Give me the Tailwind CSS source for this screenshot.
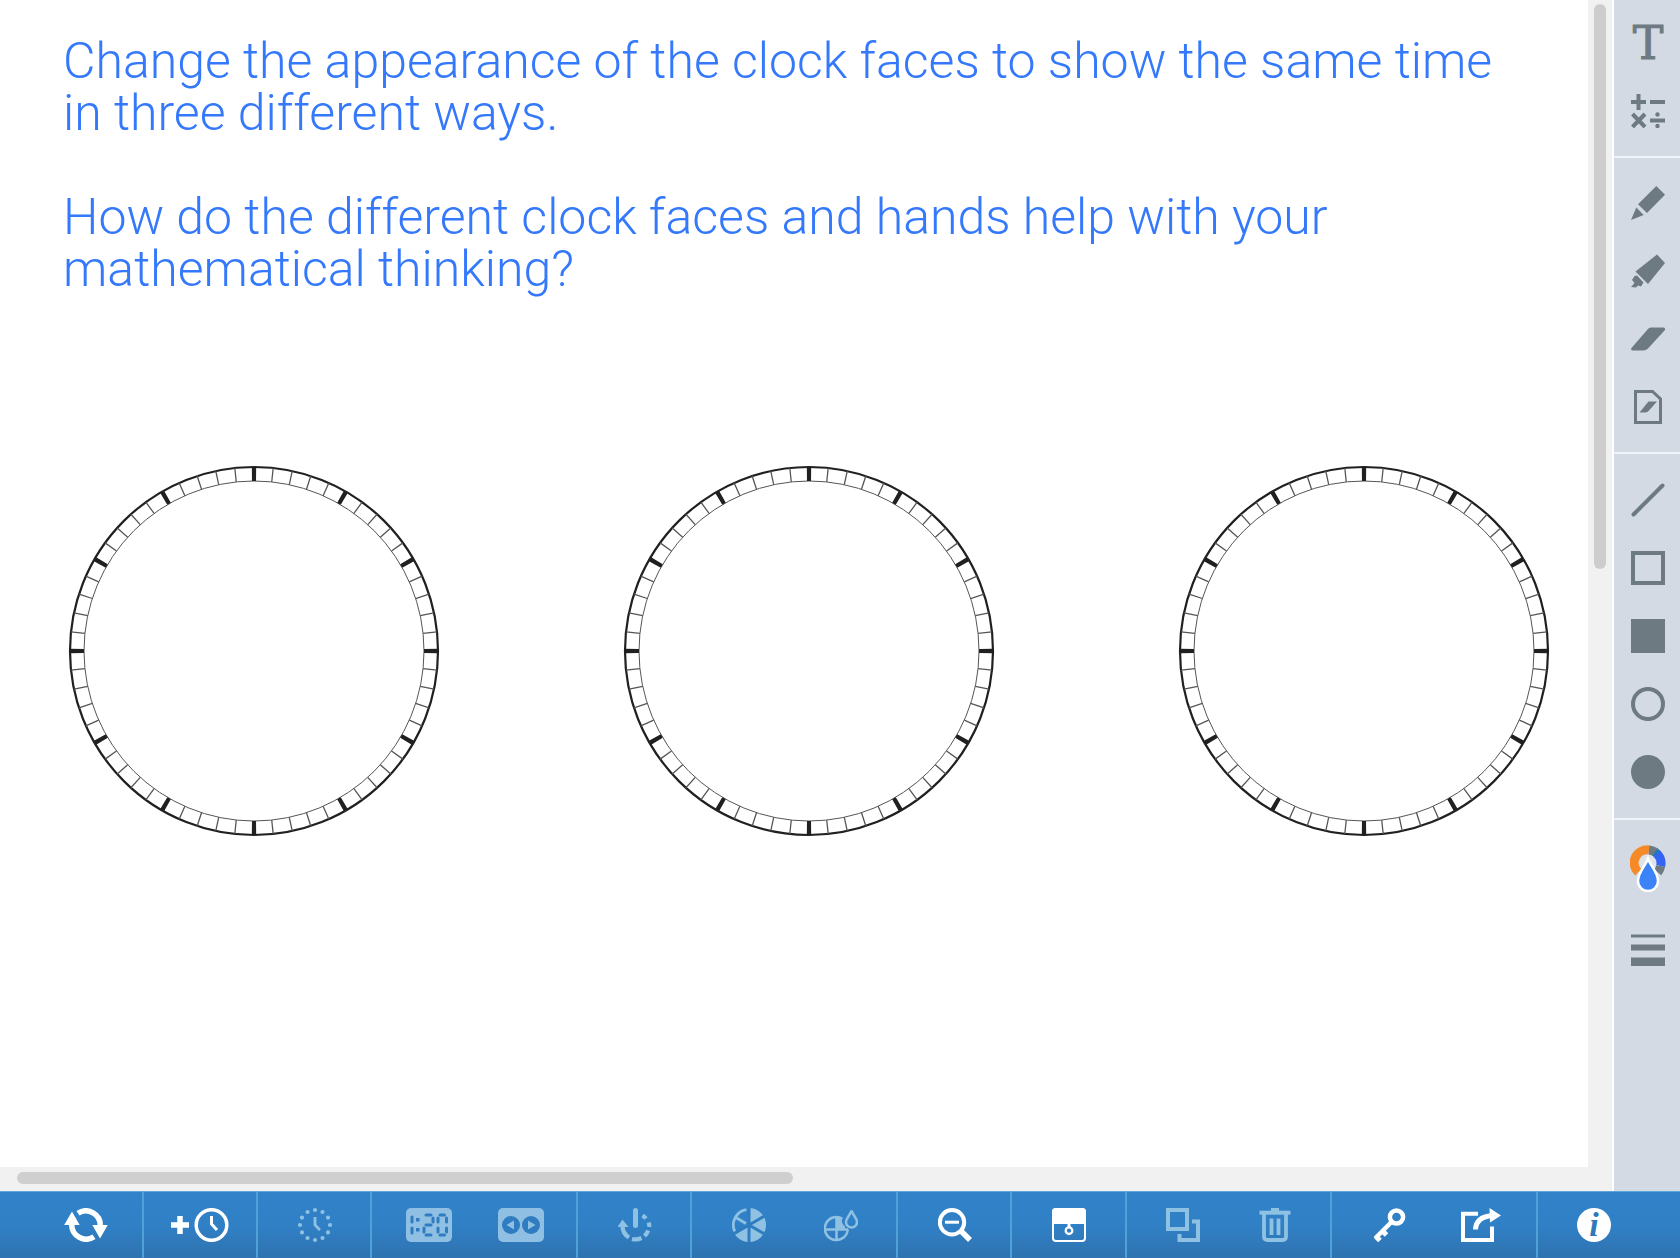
<!DOCTYPE html>
<html lang="en">
<head>
<meta charset="utf-8">
<meta name="viewport" content="width=device-width, initial-scale=1">
<title>Clock whiteboard</title>
<script src="https://cdn.jsdelivr.net/npm/@tailwindcss/browser@4"></script>
</head>
<body class="flex h-screen flex-col overflow-hidden bg-white font-[Roboto,sans-serif]">
<div class="flex min-h-0 flex-1">
  <main class="grid min-w-0 flex-1 grid-cols-[1fr_24px] grid-rows-[1fr_24px] bg-[#f1f1f1]">
    <section class="min-h-0 overflow-hidden bg-white">
      <div class="pt-[35px] pr-16 pl-[63px] text-[50px] leading-[52px] font-light text-[#3478fb]">
        <p>Change the appearance of the clock faces to show the same time <br>in three different ways.</p>
        <p class="mt-[52px]">How do the different clock faces and hands help with your <br>mathematical thinking?</p>
      </div>
      <div class="mt-[170px] flex items-center justify-between pr-[38px] pl-[68px]">
        <svg class="size-[372px]" viewBox="0 0 372 372" fill="none" stroke="#202020" role="img" aria-label="Blank clock face 1">
          <g id="face">
            <circle cx="186" cy="186" r="184" stroke-width="2.200"/>
            <circle cx="186" cy="186" r="170" stroke="#555"/>
            <circle cx="186" cy="186" r="177" stroke="#555" stroke-width="14" pathLength="1200" stroke-dasharray="1.400 18.600" stroke-dashoffset=".7"/>
            <circle cx="186" cy="186" r="177" stroke-width="14" pathLength="1200" stroke-dasharray="4.600 95.400" stroke-dashoffset="2.300"/>
          </g>
        </svg>
        <svg class="size-[372px]" viewBox="0 0 372 372" fill="none" stroke="#202020" role="img" aria-label="Blank clock face 2"><use href="#face"/></svg>
        <svg class="size-[372px]" viewBox="0 0 372 372" fill="none" stroke="#202020" role="img" aria-label="Blank clock face 3"><use href="#face"/></svg>
      </div>
    </section>
    <div class="px-1.5 pt-1"><div class="h-[565px] rounded-full bg-[#cdcdcd]"></div></div>
    <div class="pt-[5px] pl-[17px]"><div class="h-3 w-[49.4%] rounded-full bg-[#cfcfcf]"></div></div>
    <div></div>
  </main>

  <aside class="flex w-[68px] shrink-0 flex-col divide-y-2 divide-[#f0f3f7] border-l-2 border-white bg-[#d3dae4] text-[#6d7a82]" aria-label="Drawing tools">
    <div class="flex flex-col pt-[9px] pb-[11px] pl-0.5">
      <button class="flex h-[68px] items-center justify-center font-['DejaVu_Serif',serif] text-[46px] leading-none font-normal [-webkit-text-stroke:1px]" aria-label="Text">T</button>
      <button class="flex h-[68px] items-center justify-center" aria-label="Maths symbols">
        <svg class="size-[34px]" viewBox="0 0 34 34" fill="none" stroke="currentColor" stroke-width="4"><path d="M0 8H15M7.500 0V16M19 8H34M1.500 20L14 33M14 20L1.500 33M19 26.500H34"/><circle cx="26.500" cy="20.500" r="2.200" fill="currentColor" stroke="none"/><circle cx="26.500" cy="32" r="2.200" fill="currentColor" stroke="none"/></svg>
      </button>
    </div>
    <div class="flex flex-col py-[11px] pl-0.5">
      <button class="flex h-[68px] items-center justify-center" aria-label="Pencil">
        <svg class="size-[34px]" viewBox="0 0 34 34" fill="currentColor"><path d="M25.300 0L34 8.700L16 27L7 18.300zM5.300 21.500L12.700 29L0 34z"/></svg>
      </button>
      <button class="flex h-[68px] items-center justify-center" aria-label="Highlighter">
        <svg class="size-[34px]" viewBox="0 0 34 34" fill="currentColor"><path d="M26 .5L34 9L17 30L4.500 17.500zM3.500 22L6 21.500L12.500 28.500L10 32.500L7 31.500L5 33.500L0 33L3.500 29L1 26z"/></svg>
      </button>
      <button class="flex h-[68px] items-center justify-center" aria-label="Eraser">
        <svg class="size-[34px]" viewBox="0 0 34 34" fill="currentColor"><path d="M20 5.500H33Q35 6.500 33.500 8.500L17 26.500Q15 28.500 12.500 28.500H1Q-.5 27.500 .5 26L16.500 7.500Q18 5.500 20 5.500z"/></svg>
      </button>
      <button class="flex h-[68px] items-center justify-center" aria-label="Clear page">
        <svg class="size-[34px]" viewBox="0 0 34 34" fill="none" stroke="currentColor" stroke-width="3"><path d="M4.500 1.500H21.500L29.500 9V32.500H4.500z"/><path d="M17.500 11.500H26L18 20.500Q16.500 22.500 14.500 22.500H8.500z" fill="currentColor" stroke="none"/></svg>
      </button>
    </div>
    <div class="flex flex-col py-3 pl-0.5">
      <button class="flex h-[68px] items-center justify-center" aria-label="Line">
        <svg class="size-[34px]" viewBox="0 0 34 34" fill="none" stroke="currentColor" stroke-width="4"><path d="M2.500 31.500L31.500 2.500" stroke-linecap="round"/></svg>
      </button>
      <button class="flex h-[68px] items-center justify-center" aria-label="Rectangle"><span class="size-[34px] border-4 border-[#6d7a82]"></span></button>
      <button class="flex h-[68px] items-center justify-center" aria-label="Filled rectangle"><span class="size-[34px] bg-[#6d7a82]"></span></button>
      <button class="flex h-[68px] items-center justify-center" aria-label="Circle"><span class="size-[34px] rounded-full border-4 border-[#6d7a82]"></span></button>
      <button class="flex h-[68px] items-center justify-center" aria-label="Filled circle"><span class="size-[34px] rounded-full bg-[#6d7a82]"></span></button>
    </div>
    <div class="flex flex-col gap-3.5 pt-3.5 pl-0.5">
      <button class="flex h-[68px] items-center justify-center" aria-label="Colour">
        <svg class="h-[48px] w-9" viewBox="0 0 36 48" fill="none"><circle cx="18" cy="19" r="8.500" fill="#dfe3ea"/><g stroke-width="9"><path d="M8.200 28.300A13 13 0 0 1 19 6" stroke="#f58a26"/><path d="M19 6A13 13 0 0 1 25.500 8.300" stroke="#6d7a82"/><path d="M25 8A13 13 0 0 1 27.500 10.500" stroke="#247ab0"/><path d="M27 9.800A13 13 0 0 1 30.700 22" stroke="#3563f5"/><path d="M30.700 22A13 13 0 0 1 27.800 28.300" stroke="#6d7a82"/></g><path d="M18 14.500C20.500 22 28 28 28 37A10 10 0 0 1 8 37C8 28 15.500 22 18 14.500z" fill="#3b83f6" stroke="#fff" stroke-width="2.500"/></svg>
      </button>
      <button class="flex h-[68px] items-center justify-center" aria-label="Line thickness">
        <svg class="size-[34px]" viewBox="0 0 34 34" fill="currentColor"><path d="M0 1.500H34V4.500H0zM0 11.500H34V17.500H0zM0 24.500H34V33H0z"/></svg>
      </button>
    </div>
  </aside>
</div>

<footer class="grid h-[67px] shrink-0 grid-cols-[125fr_100fr_100fr_180fr_100fr_180fr_100fr_100fr_180fr_180fr_125fr] border-t border-[#5ea6d8] bg-linear-to-b from-[#3282c9] via-[#3080c6] to-[#2f73b0] text-white [&>div+div]:-ml-px [&>div+div]:border-l-2 [&>div+div]:border-[#4fa2d8]">
  <div class="flex pl-[30px]">
    <button class="flex flex-1 items-center justify-center" aria-label="Reset">
      <svg class="h-[34px] w-11" viewBox="0 0 44 34" fill="none" stroke="currentColor" stroke-width="5.500"><path d="M14 5.300A14.300 14.300 0 0 1 36.200 18M30 28.700A14.300 14.300 0 0 1 7.800 16"/><path d="M28.300 17H43.800L36 30.500zM15.700 17H.2L8 3.500z" fill="currentColor" stroke="none"/></svg>
    </button>
  </div>
  <div class="flex">
    <button class="flex flex-1 items-center justify-center" aria-label="Add clock">
      <svg class="h-[34px] w-[58px]" viewBox="0 0 58 34" fill="none" stroke="currentColor"><path d="M0 17H18M9 8V26" stroke-width="5.500"/><circle cx="40.500" cy="17" r="15.300" stroke-width="3.500"/><path d="M40.500 8V16L46 22" stroke-width="3"/></svg>
    </button>
  </div>
  <div class="flex text-[#8fc1e3]">
    <button class="flex flex-1 items-center justify-center" aria-label="Clock numbers" disabled>
      <svg class="size-[36px]" viewBox="0 0 36 36" fill="none" stroke="currentColor"><circle cx="18" cy="18" r="15" stroke-width="4.200" stroke-linecap="round" pathLength="120" stroke-dasharray="0 10"/><path d="M18 10V18L23 23" stroke-width="2.800"/></svg>
    </button>
  </div>
  <div class="flex justify-center text-[#8fbfe2]">
    <button class="flex w-[45%] items-center justify-center" aria-label="Digital time 1:20" disabled>
      <svg class="h-[34px] w-[46px]" viewBox="0 0 46 34" fill="none"><rect width="46" height="34" rx="5" fill="currentColor"/><g stroke="#2f7cc1" stroke-width="3" stroke-linecap="round"><path d="M6 9V14M6 20V25"/><path d="M20 7H25M27 10V14M20 17H25M18 20V24M20 27H25"/><path d="M34 7H38.500M40.500 10V14M40.500 20V24M34 27H38.500M32 10V14M32 20V24"/></g><path d="M10 10H13.500V13.500H10zM10 20H13.500V23.500H10z" fill="#2f7cc1"/></svg>
    </button>
    <button class="flex w-[45%] items-center justify-center" aria-label="Step time" disabled>
      <svg class="h-[34px] w-[46px]" viewBox="0 0 46 34"><rect width="46" height="34" rx="5" fill="currentColor"/><circle cx="13" cy="17" r="9" fill="#2f7cc1"/><circle cx="33" cy="17" r="9" fill="#2f7cc1"/><path d="M16 12.500V21.500L8.500 17zM30 12.500V21.500L37.500 17z" fill="currentColor"/></svg>
    </button>
  </div>
  <div class="flex text-[#8fc1e3]">
    <button class="flex flex-1 items-center justify-center" aria-label="Rotate hands" disabled>
      <svg class="size-[34px]" viewBox="0 0 34 34" fill="none" stroke="currentColor" stroke-width="4.200"><path d="M17.500 2.500V17.500" stroke-width="5" stroke-linecap="round"/><path d="M4.500 17A14 14 0 0 0 11 29.500M14 31A14 14 0 0 0 23.500 30M26.500 28A14 14 0 0 0 30.200 22.500M31.200 19A14 14 0 0 0 30.800 14.500M28 10.500A14 14 0 0 0 24.500 7.500"/><path d="M-.5 19H10.500L4.500 11.500z" fill="currentColor" stroke="none"/></svg>
    </button>
  </div>
  <div class="flex justify-center text-[#8fc1e3]">
    <button class="flex w-[45%] items-center justify-center" aria-label="Sectors" disabled>
      <svg class="size-[34px]" viewBox="0 0 34 34" fill="none"><path d="M17 0A17 17 0 1 1 2.300 25.500L17 17z" fill="currentColor"/><path d="M14.500 1.700A15.500 15.500 0 0 0 2.800 23.500M4.500 10L14 15.500" stroke="currentColor" stroke-width="2.800"/><path d="M17 0V34M17 17L32 8.300M17 17L32 25.700M17 17L2 25.700" stroke="#2f7cc1" stroke-width="3"/></svg>
    </button>
    <button class="flex w-[45%] items-center justify-center" aria-label="Sector colour" disabled>
      <svg class="size-[34px]" viewBox="0 0 34 34" fill="none" stroke="currentColor" stroke-width="2.500"><path d="M18.500 10.800A11.500 11.500 0 1 0 23.800 21.500M12.500 10V33M1 21.500H24"/><path d="M12.500 9.500Q16 9 18 10.500Q17 15 21 18.500V21.500H12.500z" fill="currentColor" stroke="none"/><path d="M27.500 2.500C28.500 7 33 10 33 14A5.500 5.500 0 0 1 22 14C22 10 26.500 7 27.500 2.500z"/></svg>
    </button>
  </div>
  <div class="flex">
    <button class="flex flex-1 items-center justify-center" aria-label="Zoom out">
      <svg class="size-[34px]" viewBox="0 0 34 34" fill="none" stroke="currentColor"><circle cx="14" cy="14.200" r="12.200" stroke-width="4"/><path d="M7 14.200H21" stroke-width="3"/><path d="M22.500 22.500L32 32" stroke-width="5.500"/></svg>
    </button>
  </div>
  <div class="flex">
    <button class="flex flex-1 items-center justify-center" aria-label="Screen blind">
      <svg class="size-[34px]" viewBox="0 0 34 34" fill="none" stroke="currentColor"><rect x="1" y="1" width="32" height="32" rx="3" stroke-width="2"/><path d="M0 16V4Q0 0 4 0H30Q34 0 34 4V16z" fill="currentColor" stroke="none"/><path d="M17 15V19.500" stroke-width="3"/><circle cx="17" cy="22.700" r="3.300" stroke-width="2.300"/></svg>
    </button>
  </div>
  <div class="flex justify-center text-[#8fc1e3]">
    <button class="flex w-[45%] items-center justify-center" aria-label="Duplicate" disabled>
      <svg class="size-[34px]" viewBox="0 0 34 34" fill="none" stroke="currentColor" stroke-width="4"><path d="M2 2H21V21H2zM26 13.500H32V32H13.500V26"/></svg>
    </button>
    <button class="flex w-[45%] items-center justify-center" aria-label="Delete" disabled>
      <svg class="size-[34px]" viewBox="0 0 34 34" fill="none" stroke="currentColor"><path d="M1.500 4.700H32.500" stroke-width="4"/><path d="M13 1.500H21" stroke-width="3"/><path d="M6 6V28.500Q6 32 9.500 32H24.500Q28 32 28 28.500V6M13.500 10.500V27M20.500 10.500V27" stroke-width="3.800"/></svg>
    </button>
  </div>
  <div class="flex justify-center">
    <button class="flex w-[45%] items-center justify-center" aria-label="Key">
      <svg class="size-[34px]" viewBox="0 0 34 34" fill="none" stroke="currentColor" stroke-width="4.500"><circle cx="24.500" cy="9" r="6.600"/><path d="M20 13.500L3.500 30"/><path d="M10 22.500L14.500 27M3.500 28L8 32.500" stroke-width="5"/></svg>
    </button>
    <button class="flex w-[45%] items-center justify-center" aria-label="Share">
      <svg class="h-[34px] w-10" viewBox="0 0 40 34" fill="none" stroke="currentColor"><path d="M17 5.700H2V32H31V18.500" stroke-width="4"/><path d="M14.500 21.500Q15 9 31 7.500" stroke-width="5"/><path d="M28.500 0L40 7.500L29 14.500z" fill="currentColor" stroke="none"/></svg>
    </button>
  </div>
  <div class="flex pr-[30px]">
    <button class="flex flex-1 items-center justify-center" aria-label="Information"><span class="flex size-[34px] items-center justify-center rounded-full bg-white font-['Liberation_Serif',serif] text-[34px] leading-[34px] font-bold text-[#2f78bb] italic">i</span></button>
  </div>
</footer>
</body>
</html>
